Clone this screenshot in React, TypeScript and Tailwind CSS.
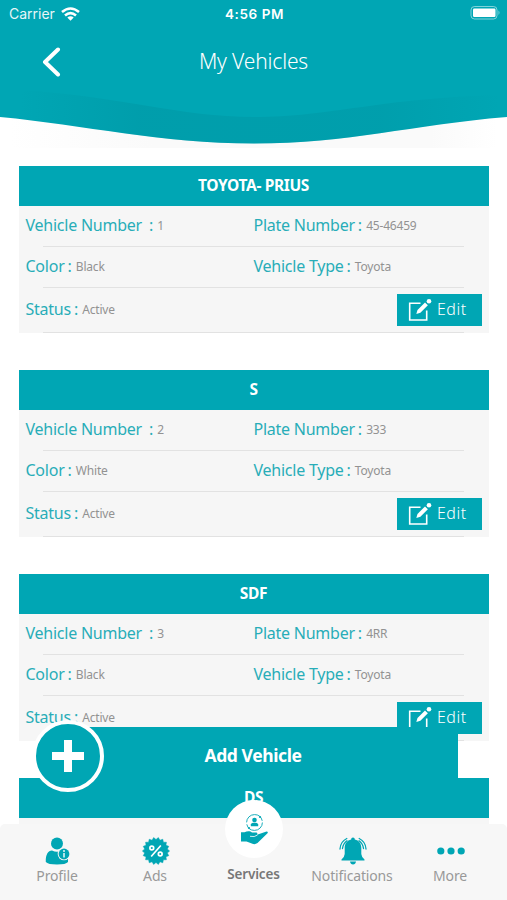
import React from "react";

const TEAL = "#00a6b4";

type Vehicle = { title: string; number: string; plate: string; color: string; type: string; status: string };

const vehicles: Vehicle[] = [
  { title: "TOYOTA- PRIUS", number: "1", plate: "45-46459", color: "Black", type: "Toyota", status: "Active" },
  { title: "S", number: "2", plate: "333", color: "White", type: "Toyota", status: "Active" },
  { title: "SDF", number: "3", plate: "4RR", color: "Black", type: "Toyota", status: "Active" },
];

function WaveBackground() {
  return (
    <svg className="absolute inset-0" width="507" height="150" viewBox="0 0 507 150" fill="none">
      <defs>
        <linearGradient id="haze" x1="0" x2="507" y1="0" y2="0" gradientUnits="userSpaceOnUse">
          <stop offset="0.02" stopColor="#fafafa" stopOpacity="0" />
          <stop offset="0.3" stopColor="#fafafa" />
          <stop offset="0.85" stopColor="#fafafa" />
          <stop offset="0.98" stopColor="#fafafa" stopOpacity="0" />
        </linearGradient>
        <linearGradient id="fold" x1="20" x2="500" y1="0" y2="0" gradientUnits="userSpaceOnUse">
          <stop offset="0" stopColor="#008592" stopOpacity="0" />
          <stop offset="0.25" stopColor="#008592" stopOpacity="0.25" />
          <stop offset="0.75" stopColor="#008592" stopOpacity="0.22" />
          <stop offset="1" stopColor="#008592" stopOpacity="0" />
        </linearGradient>
      </defs>
      <path d="M0 110H507V148H0Z" fill="url(#haze)" />
      <path d="M0 0H507V117C410 125 350 143.500 254 143.500C160 143.500 85 125 0 117Z" fill={TEAL} />
      <path d="M20 90C120 96 180 117 254 117C330 117 380 98 500 95V117.600C410 125 350 143.500 254 143.500C160 143.500 95 126 20 119Z" fill="url(#fold)" />
    </svg>
  );
}

function StatusBar() {
  return (
    <div className="flex h-7 items-center justify-between pl-[9px] pr-[6px] font-[Inter,sans-serif] text-[13.5px] text-white">
      <div className="flex w-[160px] items-center gap-[6px] pb-px">
        <span className="text-[14px] opacity-90">Carrier</span>
        <svg width="19" height="14" viewBox="0 0 19 14" fill="none" stroke="white" strokeWidth="2.600">
          <path d="M1 5Q9.500-2 18 5" />
          <path d="M4 8.400Q9.500 3.700 15 8.400" />
          <path d="M9.500 13.800L6.300 10.600Q9.500 8.100 12.700 10.600Z" fill="white" stroke="none" />
        </svg>
      </div>
      <span className="relative left-[-0.5px] font-semibold tracking-[0.6px]">4:56 PM</span>
      <div className="flex w-[160px] justify-end pb-px">
        <svg width="31" height="15" viewBox="0 0 31 15" fill="none">
          <rect x="1" y="0.500" width="26" height="12.500" rx="3.500" stroke="white" strokeOpacity="0.5" />
          <rect x="3" y="2.500" width="22.500" height="8.500" rx="1.200" fill="white" />
          <path d="M28.500 4.500V9Q30.500 6.700 28.500 4.500Z" fill="white" fillOpacity="0.5" />
        </svg>
      </div>
    </div>
  );
}

function EditIcon() {
  return (
    <svg width="24" height="24" viewBox="0 0 24 24" fill="none">
      <path d="M12.500 5.200H1.700V22H18.700V12.500" stroke="white" strokeWidth="1.600" />
      <path d="M8.300 15.900L9.500 11.900L17 4.400L19.900 7.300L12.400 14.800Z" fill="white" />
      <circle cx="21" cy="3.200" r="2.300" fill="white" />
    </svg>
  );
}

function Field({ label, value, wide }: { label: string; value: string; wide?: boolean }) {
  return (
    <div className="flex items-center whitespace-nowrap">
      <span className="pb-[3px] text-[16px] tracking-[-0.24px] text-[#28adb8]">{label}</span>
      <span className={(wide ? "ml-[7px]" : "ml-[3px]") + " mr-1 pb-[3px] text-[16px] text-[#28adb8]"}>:</span>
      <span className="pb-px text-[12px] tracking-[-0.2px] text-[#929292]">{value}</span>
    </div>
  );
}

function VehicleCard({ v }: { v: Vehicle }) {
  return (
    <section className="h-[167px] w-[470px] shrink-0 bg-[#f6f6f6]">
      <h2 className="flex h-10 items-center justify-center bg-[#00a6b4] text-[15.5px] font-bold tracking-[-0.35px] text-white">{v.title}</h2>
      <div className="grid h-10 grid-cols-[228px_1fr] items-center pl-[7px]">
        <Field label="Vehicle Number" value={v.number} wide />
        <Field label="Plate Number" value={v.plate} />
      </div>
      <hr className="ml-6 w-[421px] border-[#e2e2e2]" />
      <div className="grid h-10 grid-cols-[228px_1fr] items-center pl-[7px]">
        <Field label="Color" value={v.color} />
        <Field label="Vehicle Type" value={v.type} />
      </div>
      <hr className="ml-6 w-[421px] border-[#e2e2e2]" />
      <div className="flex h-[44px] items-center justify-between pl-[7px] pr-[7px]">
        <Field label="Status" value={v.status} />
        <button className="flex h-8 w-[85px] items-center gap-[5.5px] bg-[#00a6b4] pl-[11px] text-[16px] font-light tracking-[0.5px] text-white">
          <EditIcon />
          <span className="pb-[2px]">Edit</span>
        </button>
      </div>
      <hr className="ml-6 w-[421px] border-[#e2e2e2]" />
    </section>
  );
}

function ProfileIcon() {
  return (
    <svg width="28" height="28" viewBox="0 0 28 28" fill={TEAL}>
      <circle cx="13" cy="6.500" r="6" />
      <path d="M1.800 25C1.500 17.500 4 13.800 8 13.500Q13 16 18 13.500L24 18V25Q22 27.500 13 27.500Q4 27.500 1.800 25Z" />
      <circle cx="20" cy="17" r="6.300" fill="#f7f7f7" />
      <circle cx="20" cy="17" r="5.400" />
      <circle cx="20" cy="14" r="0.900" fill="white" />
      <path d="M19.300 16H20.700V20.500H19.300Z" fill="white" />
    </svg>
  );
}

function AdsIcon() {
  const points = Array.from({ length: 36 }, (_, i) => {
    const a = (i * Math.PI) / 18;
    const r = i % 2 ? 11.5 : 13.6;
    return `${14 + r * Math.cos(a)},${14 + r * Math.sin(a)}`;
  }).join(" ");
  return (
    <svg width="28" height="28" viewBox="0 0 28 28" fill="none">
      <polygon points={points} fill={TEAL} stroke={TEAL} strokeWidth="0.500" strokeLinejoin="round" />
      <g stroke="white" strokeWidth="1.700">
        <circle cx="9.800" cy="11" r="1.900" />
        <circle cx="18.200" cy="17" r="1.900" />
        <path d="M18.800 8.500L9.200 19.500" />
      </g>
    </svg>
  );
}

function BellIcon() {
  return (
    <svg width="28" height="28" viewBox="0 0 28 28" fill="none">
      <path d="M14 0.500C15.200 0.500 15.800 1.300 15.800 2.500C20 3.500 22.300 6.500 22.300 11V17Q22.500 20 25.500 22.500V23.500H2.500V22.500Q5.500 20 5.700 17V11C5.700 6.500 8 3.500 12.200 2.500C12.200 1.300 12.800 0.500 14 0.500Z" fill={TEAL} />
      <path d="M11 24.500H17Q16.500 27.500 14 27.500Q11.500 27.500 11 24.500Z" fill={TEAL} />
      <g stroke={TEAL} strokeWidth="1.300" strokeLinecap="round">
        <path d="M7.800 1.500Q1.500 4.500 1 12" />
        <path d="M8 3.800Q4.200 6.500 3.500 11.500" />
        <path d="M20.200 1.500Q26.500 4.500 27 12" />
        <path d="M20 3.800Q23.800 6.500 24.500 11.500" />
      </g>
    </svg>
  );
}

function MoreIcon() {
  return (
    <svg width="28" height="28" viewBox="0 0 28 28" fill={TEAL}>
      <circle cx="3.800" cy="14" r="3.600" />
      <circle cx="14" cy="14" r="3.600" />
      <circle cx="24.200" cy="14" r="3.600" />
    </svg>
  );
}

function ServicesIcon() {
  return (
    <svg width="30" height="34" viewBox="0 0 30 34" fill="none">
      <circle cx="15.500" cy="10.500" r="7.900" stroke={TEAL} strokeWidth="0.900" strokeDasharray="22.800 2" />
      <circle cx="21" cy="5" r="1.100" fill={TEAL} />
      <circle cx="10" cy="16" r="1.100" fill={TEAL} />
      <circle cx="15.500" cy="8" r="2.300" fill={TEAL} />
      <path d="M11.800 14.300V12.600Q12.300 10.900 14 10.800H17Q18.700 10.900 19.200 12.600V14.300Z" fill={TEAL} />
      <path d="M2 20.300H5.500C8.500 18.500 11.500 19 13 20.500H17.500Q19 21.200 18 22.700L27.500 19.500Q29.500 19.700 28.500 21.200L18.500 31Q15.500 33.300 11.500 31L7.500 29.500H2Z" fill={TEAL} />
      <path d="M11 24.300Q15.500 25.500 18.500 23" stroke="white" strokeWidth="0.800" />
    </svg>
  );
}

function Tab({ label, icon }: { label: string; icon: React.ReactNode }) {
  return (
    <div className="flex flex-col items-center pt-[13px]">
      <div className="pl-px">{icon}</div>
      <span className="mt-px text-[14px] leading-[20px] tracking-[-0.15px] text-[#999999]">{label}</span>
    </div>
  );
}

export default function App() {
  return (
    <main className="relative h-[900px] w-[507px] overflow-hidden bg-white font-['Noto_Sans','Open_Sans',sans-serif]">
      <header className="relative h-[166px]">
        <WaveBackground />
        <div className="relative">
          <StatusBar />
          <div className="grid h-[66px] grid-cols-[80px_1fr_80px] items-center">
            <svg className="ml-[41px] mt-px" width="20" height="30" viewBox="0 0 20 30" fill="none">
              <path d="M17 2.500L4 15L17 27.500" stroke="white" strokeWidth="4" strokeLinecap="round" strokeLinejoin="round" />
            </svg>
            <h1 className="pt-[2px] text-center text-[21px] font-light tracking-[-0.15px] text-white">My Vehicles</h1>
          </div>
        </div>
      </header>

      <div className="flex flex-col items-center gap-[37px]">
        {vehicles.map((v) => (
          <VehicleCard key={v.title} v={v} />
        ))}
        <section className="h-[60px] w-[470px] shrink-0 bg-[#f6f6f6]">
          <h2 className="flex h-10 items-center justify-center bg-[#00a6b4] text-[15.5px] font-bold tracking-[-0.35px] text-white">DS</h2>
        </section>
      </div>

      <button className="absolute left-[68px] top-[727px] flex h-[51px] w-[390px] items-center justify-center bg-[#00a6b4] pr-[20px] pt-[5px] text-[17.5px] font-bold tracking-[-0.4px] text-white">
        Add Vehicle
      </button>
      <div className="absolute left-[32px] top-[719.500px] flex size-[72px] items-center justify-center rounded-full border-[4.5px] border-white bg-[#00a6b4]">
        <svg width="34" height="34" viewBox="0 0 34 34" stroke="white" strokeWidth="8">
          <path d="M17 1V33M1 17H33" />
        </svg>
      </div>

      <nav className="absolute bottom-0 left-0 grid h-[76px] w-full grid-cols-[114px_82px_115px_82px_114px] rounded-t-[5px] bg-[#f7f7f7]">
        <Tab label="Profile" icon={<ProfileIcon />} />
        <Tab label="Ads" icon={<AdsIcon />} />
        <div className="flex flex-col items-center">
          <div className="-mt-6 flex size-[58px] items-center justify-center rounded-full bg-white">
            <ServicesIcon />
          </div>
          <span className="mt-[6px] text-[13.5px] font-semibold leading-[20px] tracking-[-0.15px] text-[#777777]">Services</span>
        </div>
        <Tab label="Notifications" icon={<BellIcon />} />
        <Tab label="More" icon={<MoreIcon />} />
      </nav>
    </main>
  );
}
